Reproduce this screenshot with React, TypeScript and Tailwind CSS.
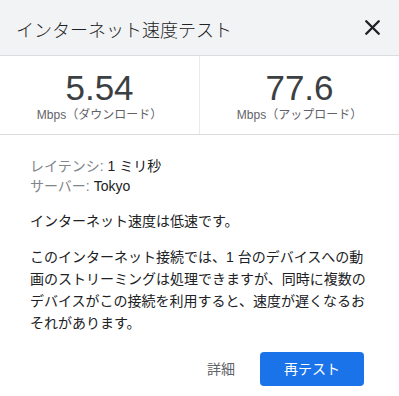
import { X } from "lucide-react";

const font = {
  fontFamily: '"Liberation Sans", Arial, "Noto Sans CJK JP", sans-serif',
};

function Stat({ value, label }: { value: string; label: string }) {
  return (
    <div className="flex flex-1 flex-col items-center pt-[12px]">
      <div className="text-[35px] leading-[40px] text-[#3c4043]">{value}</div>
      <div className="-mt-[1px] text-[12px] leading-[16px] text-[#5f6368]">{label}</div>
    </div>
  );
}

export default function App() {
  return (
    <div
      className="h-[396px] w-[399px] overflow-hidden bg-white"
      style={font}
    >
      <div className="flex h-[56px] items-center justify-between border-b border-[#dadce0] bg-[#f1f3f4] pl-[16px] pr-[14px]">
        <h1 className="mt-[8px] text-[18px] font-light text-[#202124]">
          インターネット速度テスト
        </h1>
        <button className="flex h-[26px] w-[26px] items-center justify-center text-[#202124]">
          <X size={25} strokeWidth={2.3} />
        </button>
      </div>

      <div className="flex h-[79px] border-b border-[#dadce0]">
        <Stat value="5.54" label="Mbps（ダウンロード）" />
        <div className="w-px bg-[#e8eaed]" />
        <Stat value="77.6" label="Mbps（アップロード）" />
      </div>

      <div className="px-[30px] pt-[21px] text-[14px] text-[#202124]">
        <div className="leading-[20px]">
          <div>
            <span className="text-[#80868b]">レイテンシ: </span>1 ミリ秒
          </div>
          <div>
            <span className="text-[#80868b]">サーバー: </span>Tokyo
          </div>
        </div>
        <p className="mt-[14px] leading-[22px]">インターネット速度は低速です。</p>
        <p className="mt-[14px] leading-[22px]">
          このインターネット接続では、1 台のデバイスへの動画のストリーミングは処理できますが、同時に複数のデバイスがこの接続を利用すると、速度が遅くなるおそれがあります。
        </p>
      </div>

      <div className="mt-[18px] flex items-center justify-end pr-[35px]">
        <button className="mr-[25px] text-[14px] text-[#5f6368]">詳細</button>
        <button className="h-[34px] w-[104px] rounded-[4px] bg-[#1a73e8] text-[14px] text-white">
          再テスト
        </button>
      </div>
    </div>
  );
}
